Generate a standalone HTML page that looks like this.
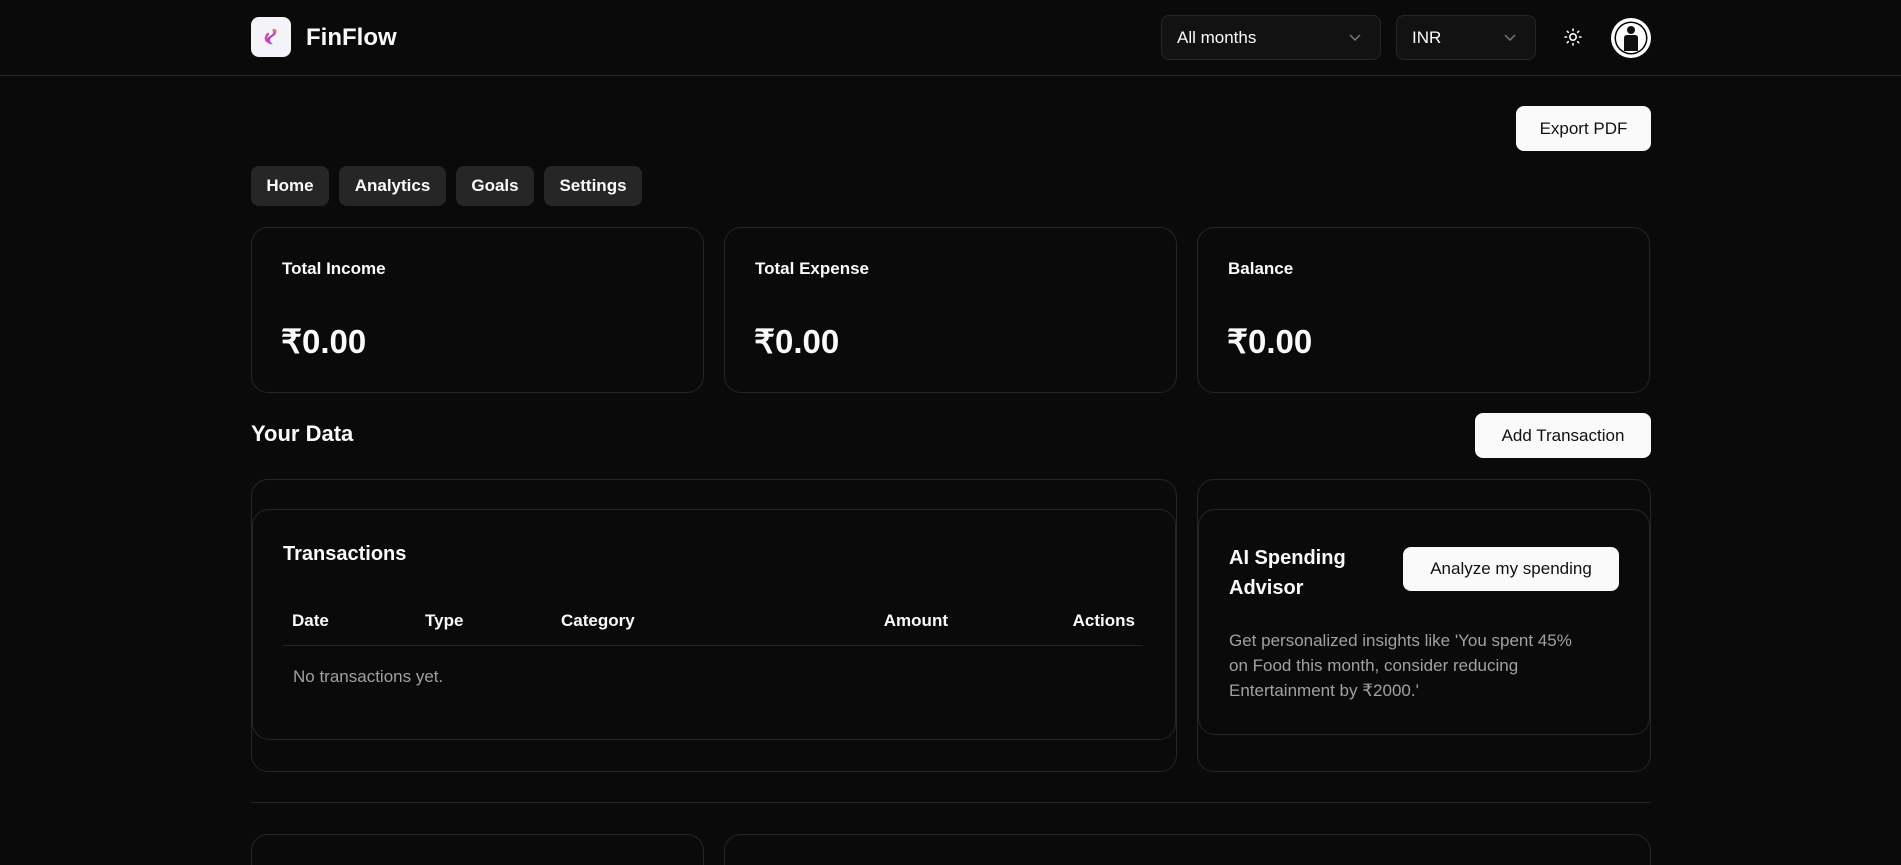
<!DOCTYPE html>
<html style="overflow:hidden;width:1901px;height:865px"><head><meta charset="utf-8"><style>
*{box-sizing:border-box;margin:0;padding:0}
body{width:1901px;height:865px;overflow:hidden;background:#0a0a0a;color:#fafafa;font-family:"Liberation Sans",sans-serif;position:relative}
.a{position:absolute}
.hdr{left:0;top:75px;width:1901px;height:1px;background:#262626}
.logo{left:251px;top:17px;width:40px;height:40px;border-radius:8px;background:#f4f4f8}
.sel{border:1px solid #262626;background:#121212;border-radius:8px;height:45px;top:15px;font-size:17px;padding:12px 15px}
.chev{position:absolute;right:18px;top:16px}
.btnw{background:#fafafa;color:#111;border-radius:8px;font-size:17px;text-align:center}
.nav{top:166px;height:40px;background:#262626;border-radius:8px;font-size:17px;font-weight:bold;text-align:center;line-height:40px}
.card{border:1px solid #262626;border-radius:17px}
.lbl{font-size:17px;font-weight:bold}
.amt{font-size:33px;font-weight:bold}
.th{top:611px;font-size:17px;font-weight:bold}
</style></head><body>
<div class="a logo"><svg width="40" height="40" viewBox="0 0 40 40"><defs><linearGradient id="g" x1="0" y1="1" x2="1" y2="0"><stop offset="0" stop-color="#d946a8"/><stop offset=".5" stop-color="#8b3fd9"/><stop offset="1" stop-color="#f59e3b"/></linearGradient></defs><path d="M22 12c4-1 5 3 2 6-2 2-5 2-5 5 0 3 3 4 3 4-4 1-7-2-6-5 1-3 5-3 6-6 0-2-1-3 0-4z" fill="url(#g)"/><path d="M17 17c-2 2-3 5-1 7" stroke="#d946a8" stroke-width="2.5" fill="none" stroke-linecap="round"/></svg></div>
<div class="a" style="left:306px;top:24px;font-size:24px;font-weight:bold">FinFlow</div>
<div class="a sel" style="left:1161px;width:220px">All months<svg class="chev" width="14" height="10" viewBox="0 0 14 10"><path d="M2 3l5 5 5-5" stroke="#777" stroke-width="1.5" fill="none"/></svg></div>
<div class="a sel" style="left:1396px;width:140px">INR<svg class="chev" width="14" height="10" viewBox="0 0 14 10"><path d="M2 3l5 5 5-5" stroke="#777" stroke-width="1.5" fill="none"/></svg></div>
<svg class="a" style="left:1563px;top:27px" width="20" height="20" viewBox="0 0 20 20" stroke="#fafafa" stroke-width="1.6" fill="none" stroke-linecap="round"><circle cx="10" cy="10" r="3.2"/><path d="M10 2v1.5M10 16.5V18M2 10h1.5M16.5 10H18M4.3 4.3l1 1M14.7 14.7l1 1M4.3 15.7l1-1M14.7 5.3l1-1"/></svg>
<svg class="a" style="left:1611px;top:18px" width="40" height="40" viewBox="0 0 40 40"><circle cx="20" cy="20" r="20" fill="#fff"/><circle cx="20" cy="20" r="16.5" fill="#000"/><circle cx="20" cy="20" r="15" fill="#fff"/><circle cx="20" cy="12" r="4" fill="#111"/><path d="M13 20q0-3 3-3h8q3 0 3 3v13h-14z" fill="#111"/></svg>
<div class="a hdr"></div>
<div class="a btnw" style="left:1516px;top:106px;width:135px;height:45px;line-height:45px">Export PDF</div>
<div class="a nav" style="left:251px;width:78px">Home</div>
<div class="a nav" style="left:339px;width:107px">Analytics</div>
<div class="a nav" style="left:456px;width:78px">Goals</div>
<div class="a nav" style="left:544px;width:98px">Settings</div>
<div class="a card" style="left:251px;top:227px;width:453px;height:166px"></div>
<div class="a card" style="left:724px;top:227px;width:453px;height:166px"></div>
<div class="a card" style="left:1197px;top:227px;width:453px;height:166px"></div>
<div class="a lbl" style="left:282px;top:259px">Total Income</div>
<div class="a lbl" style="left:755px;top:259px">Total Expense</div>
<div class="a lbl" style="left:1228px;top:259px">Balance</div>
<div class="a amt" style="left:281px;top:322px">₹0.00</div>
<div class="a amt" style="left:754px;top:322px">₹0.00</div>
<div class="a amt" style="left:1227px;top:322px">₹0.00</div>
<div class="a" style="left:251px;top:421px;font-size:22px;font-weight:bold">Your Data</div>
<div class="a btnw" style="left:1475px;top:413px;width:176px;height:45px;line-height:45px">Add Transaction</div>
<div class="a card" style="left:251px;top:479px;width:926px;height:293px"></div>
<div class="a card" style="left:252px;top:509px;width:924px;height:231px"></div>
<div class="a" style="left:283px;top:543px;font-size:20px;font-weight:bold">Transactions</div>
<div class="a th" style="left:292px">Date</div>
<div class="a th" style="left:425px">Type</div>
<div class="a th" style="left:561px">Category</div>
<div class="a th" style="left:848px;width:100px;text-align:right">Amount</div>
<div class="a th" style="left:1035px;width:100px;text-align:right">Actions</div>
<div class="a" style="left:283px;top:645px;width:860px;height:1px;background:#262626"></div>
<div class="a" style="left:293px;top:667px;font-size:17px;color:#a1a1a1">No transactions yet.</div>
<div class="a card" style="left:1197px;top:479px;width:454px;height:293px"></div>
<div class="a card" style="left:1198px;top:509px;width:452px;height:226px"></div>
<div class="a" style="left:1229px;top:543px;font-size:20px;font-weight:bold;line-height:30px">AI Spending<br>Advisor</div>
<div class="a btnw" style="left:1403px;top:547px;width:216px;height:44px;line-height:44px">Analyze my spending</div>
<div class="a" style="left:1229px;top:628px;width:362px;font-size:17px;line-height:25px;color:#a1a1a1">Get personalized insights like 'You spent 45% on Food this month, consider reducing Entertainment by ₹2000.'</div>
<div class="a" style="left:251px;top:802px;width:1400px;height:1px;background:#262626"></div>
<div class="a card" style="left:251px;top:834px;width:453px;height:60px"></div>
<div class="a card" style="left:724px;top:834px;width:927px;height:60px"></div>
</body></html>
